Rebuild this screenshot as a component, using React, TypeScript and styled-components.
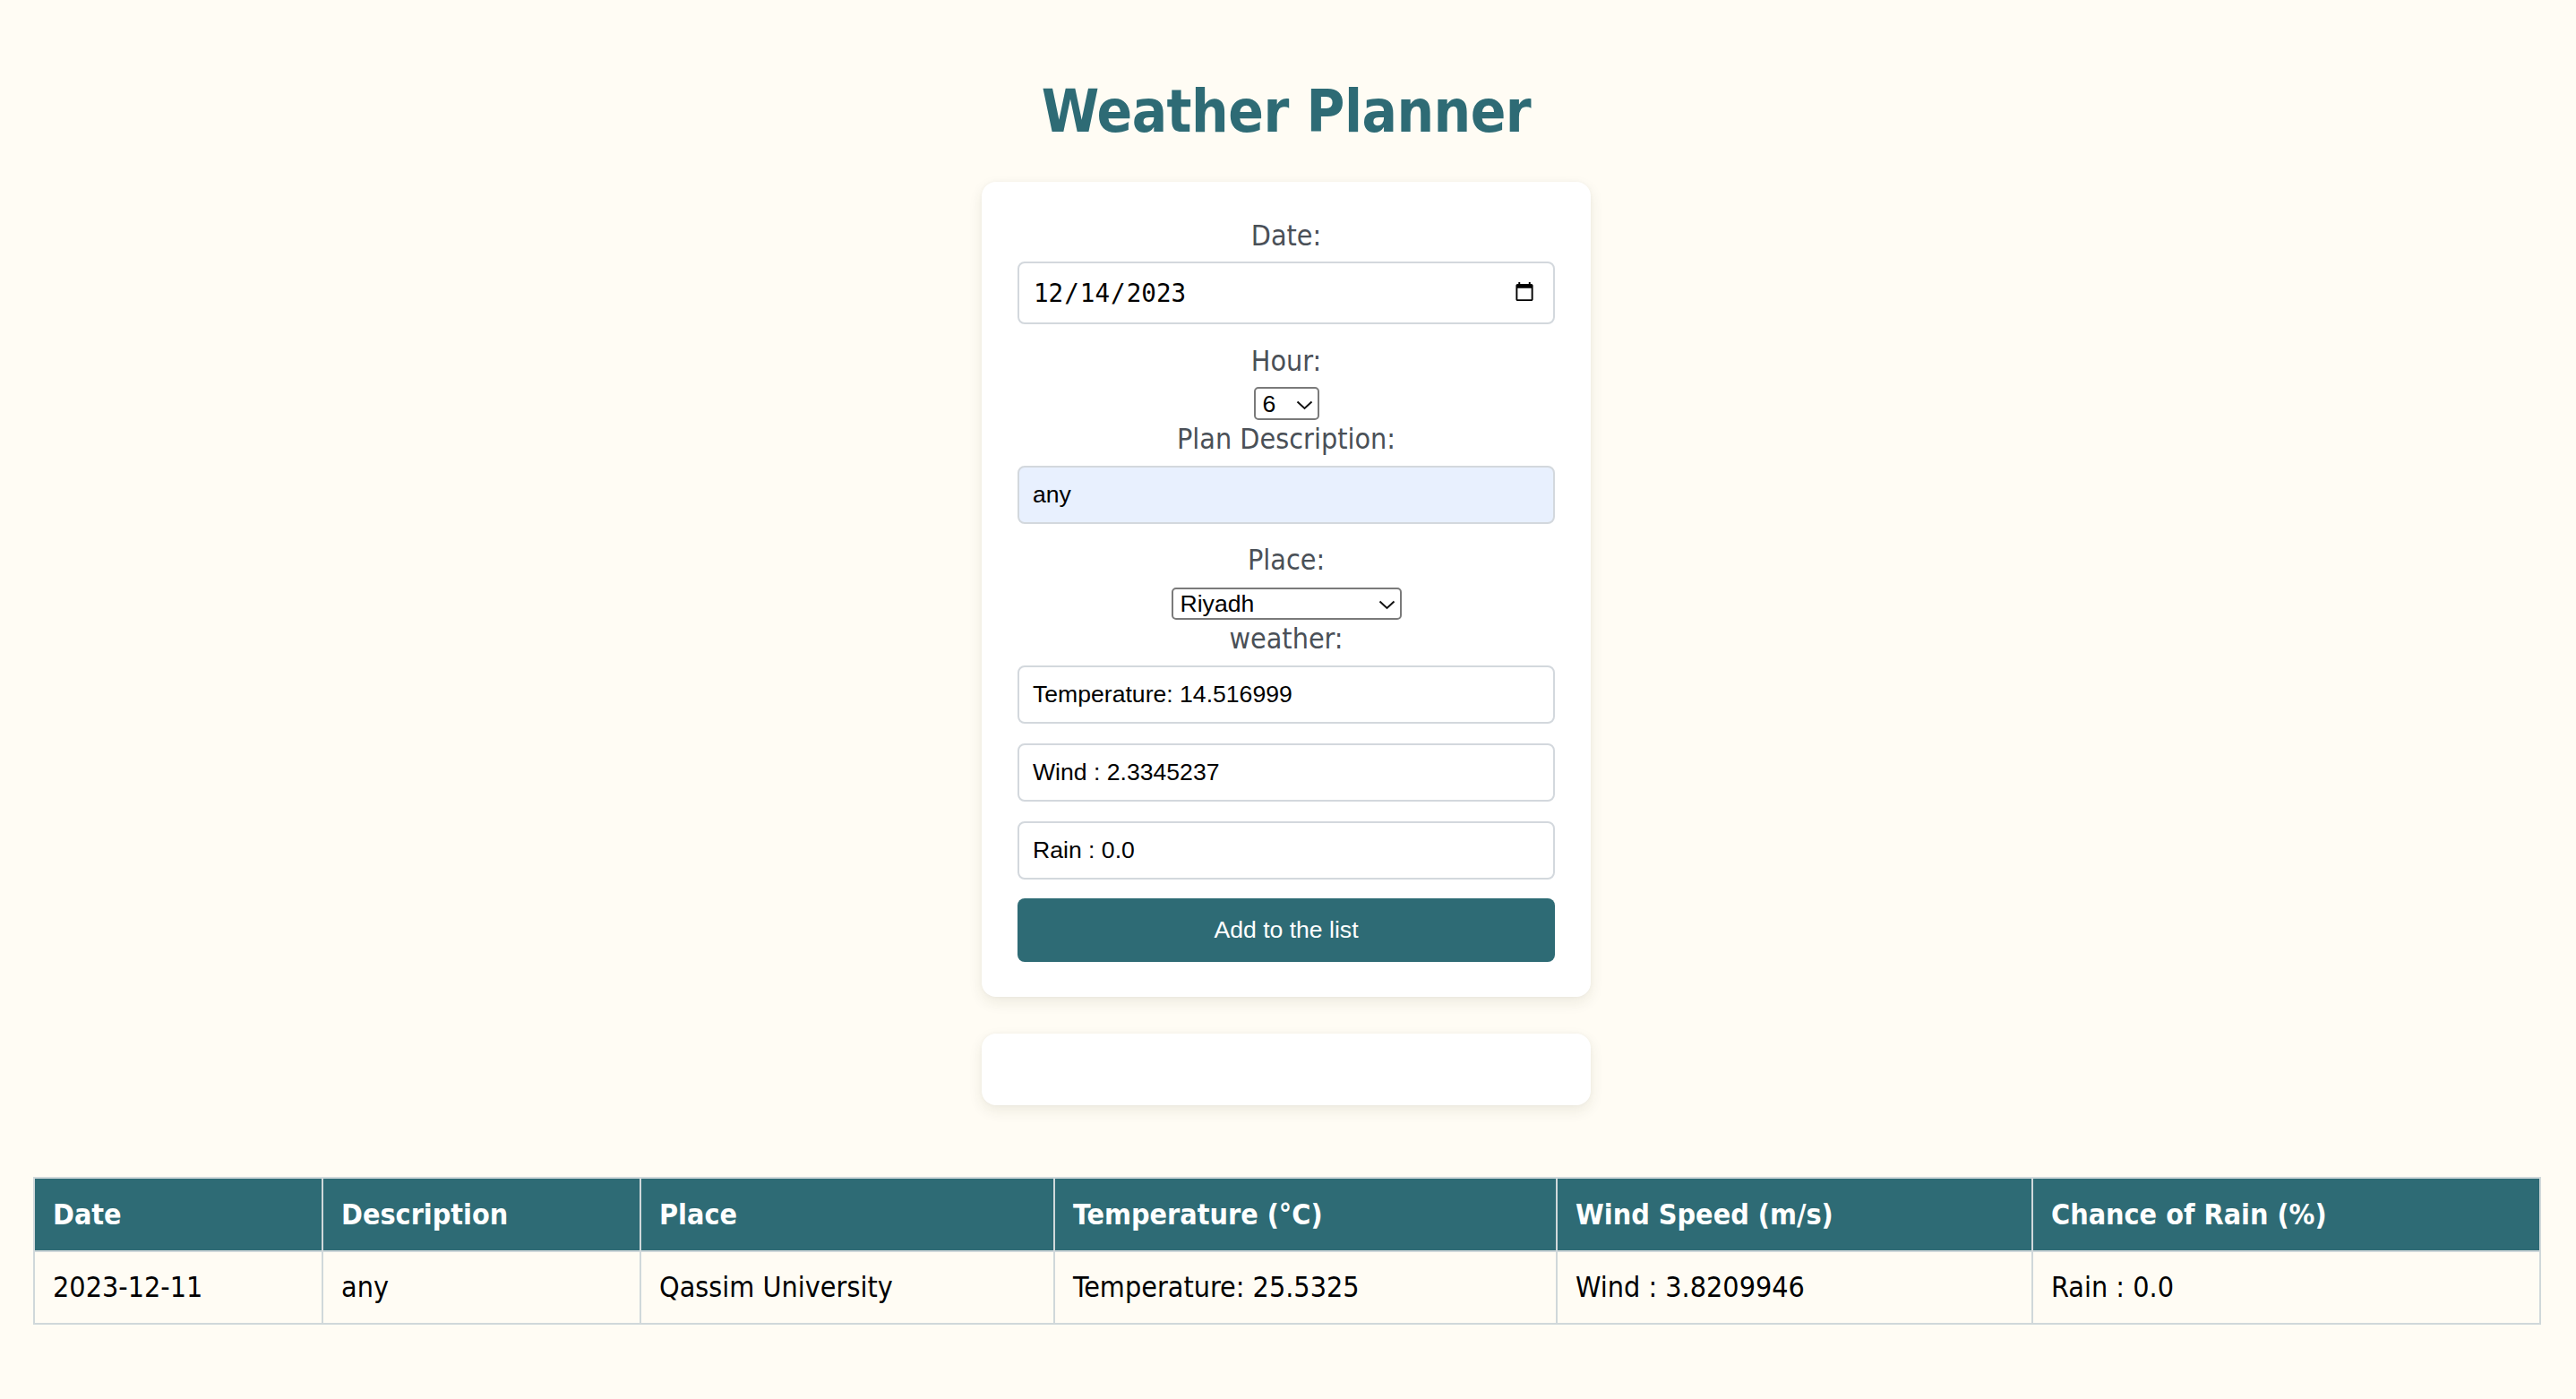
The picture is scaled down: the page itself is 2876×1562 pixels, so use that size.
import React from "react";
import styled, { createGlobalStyle } from "styled-components";

const GlobalStyle = createGlobalStyle`
  html, body {
    margin: 0;
    padding: 0;
    background: #fffcf4;
  }
  * { box-sizing: border-box; }
`;

const Page = styled.div`
  min-height: 1562px;
  padding: 87px 4px 0 0;
  background: #fffcf4;
  font-family: "DejaVu Sans Condensed", "DejaVu Sans", sans-serif;
  display: flex;
  flex-direction: column;
  align-items: stretch;
`;

const Title = styled.h1`
  margin: 0;
  font-size: 65px;
  line-height: 76px;
  font-weight: 700;
  letter-spacing: -0.5px;
  color: #2e6b75;
  text-align: center;
  font-family: "DejaVu Sans Condensed", "DejaVu Sans", sans-serif;
`;

const Card = styled.div<{ $mt: number; $h?: number }>`
  width: 680px;
  margin: ${(p) => p.$mt}px auto 0;
  background: #ffffff;
  border-radius: 16px;
  box-shadow: 0 6px 16px rgba(60, 50, 20, 0.09), 0 0 4px rgba(60, 50, 20, 0.04);
  ${(p) => (p.$h ? `height: ${p.$h}px;` : "")}
`;

const Form = styled.form`
  display: flex;
  flex-direction: column;
  align-items: center;
  padding: 42px 40px 39px;
`;

const Label = styled.label<{ $mb?: number }>`
  display: block;
  font-size: 32px;
  line-height: 37px;
  color: #4a5057;
  text-align: center;
  margin-bottom: ${(p) => p.$mb ?? 10}px;
`;

const TextField = styled.input<{ $h: number; $mb: number; $fill?: boolean }>`
  display: block;
  align-self: stretch;
  width: 100%;
  height: ${(p) => p.$h}px;
  margin: 0 0 ${(p) => p.$mb}px;
  padding: 0 15px;
  border: 2px solid #d3d8dd;
  border-radius: 8px;
  background: ${(p) => (p.$fill ? "#e8f0fe" : "#ffffff")};
  font-family: "Liberation Sans", Arial, sans-serif;
  font-size: 26.6px;
  color: #000;
  outline: none;
`;

const DateField = styled.input`
  display: block;
  align-self: stretch;
  width: 100%;
  height: 70px;
  margin: 0 0 23px;
  padding: 0 20px 0 15px;
  border: 2px solid #d3d8dd;
  border-radius: 8px;
  background: #ffffff;
  font-family: "DejaVu Sans Mono", monospace;
  font-size: 27.6px;
  color: #000;
  outline: none;
  &::-webkit-calendar-picker-indicator {
    width: 24px;
    height: 26px;
    padding: 0;
    margin: 0;
  }
`;

const SelectWrap = styled.div<{ $w: number; $h: number; $mb: number }>`
  position: relative;
  width: ${(p) => p.$w}px;
  height: ${(p) => p.$h}px;
  margin-bottom: ${(p) => p.$mb}px;
`;

const Select = styled.select<{ $pl: number }>`
  appearance: none;
  -webkit-appearance: none;
  width: 100%;
  height: 100%;
  margin: 0;
  padding: 0 0 0 ${(p) => p.$pl}px;
  border: 2px solid #7a7a7a;
  border-radius: 5px;
  background: #ffffff;
  font-family: "Liberation Sans", Arial, sans-serif;
  font-size: 26.6px;
  color: #000;
  outline: none;
`;

const Chevron = styled.svg`
  position: absolute;
  right: 7px;
  top: 50%;
  width: 19px;
  height: 11px;
  margin-top: -4px;
  pointer-events: none;
`;

const Button = styled.button`
  align-self: stretch;
  width: 100%;
  height: 71px;
  margin: 0;
  border: none;
  border-radius: 8px;
  background: #2e6b75;
  color: #ffffff;
  font-family: "Liberation Sans", Arial, sans-serif;
  font-size: 26.6px;
  cursor: pointer;
`;

const TableWrap = styled.div`
  margin-top: 80px;
  padding: 0 37px 0 37px;
`;

const Table = styled.table`
  width: 2798px;
  border-collapse: collapse;
  table-layout: fixed;
  font-family: "DejaVu Sans Condensed", "DejaVu Sans", sans-serif;
  font-size: 32px;
`;

const Th = styled.th`
  background: #2e6b75;
  color: #ffffff;
  font-weight: 700;
  text-align: left;
  padding: 21px 20px;
  line-height: 38px;
  border: 2px solid #d0d8da;
  white-space: nowrap;
`;

const Td = styled.td`
  color: #000;
  text-align: left;
  padding: 21px 20px;
  line-height: 37px;
  border: 2px solid #d0d8da;
  white-space: nowrap;
`;

const ChevronIcon = () => (
  <Chevron viewBox="0 0 19 11">
    <path d="M1.5 1.5 L9.5 9 L17.5 1.5" fill="none" stroke="#111" strokeWidth="2" />
  </Chevron>
);

const columns = [
  { label: "Date", width: 322 },
  { label: "Description", width: 355 },
  { label: "Place", width: 462 },
  { label: "Temperature (°C)", width: 561 },
  { label: "Wind Speed (m/s)", width: 531 },
  { label: "Chance of Rain (%)", width: 567 },
];

const rows = [
  ["2023-12-11", "any", "Qassim University", "Temperature: 25.5325", "Wind : 3.8209946", "Rain : 0.0"],
];

export default function App() {
  const hours = Array.from({ length: 24 }, (_, i) => i);
  return (
    <>
      <GlobalStyle />
      <Page>
        <Title>Weather Planner</Title>
        <Card $mt={40}>
          <Form onSubmit={(e) => e.preventDefault()}>
            <Label htmlFor="date">Date:</Label>
            <DateField id="date" type="date" defaultValue="2023-12-14" />

            <Label htmlFor="hour">Hour:</Label>
            <SelectWrap $w={73} $h={37} $mb={3}>
              <Select id="hour" $pl={8} defaultValue="6">
                {hours.map((h) => (
                  <option key={h} value={String(h)}>
                    {h}
                  </option>
                ))}
              </Select>
              <ChevronIcon />
            </SelectWrap>

            <Label htmlFor="desc" $mb={11}>Plan Description:</Label>
            <TextField id="desc" $h={65} $mb={22} $fill defaultValue="any" />

            <Label htmlFor="place" $mb={12}>Place:</Label>
            <SelectWrap $w={257} $h={36} $mb={3}>
              <Select id="place" $pl={8} defaultValue="Riyadh">
                <option value="Riyadh">Riyadh</option>
                <option value="Qassim University">Qassim University</option>
                <option value="Jeddah">Jeddah</option>
              </Select>
              <ChevronIcon />
            </SelectWrap>

            <Label $mb={11}>weather:</Label>
            <TextField $h={65} $mb={22} readOnly value="Temperature: 14.516999" />
            <TextField $h={65} $mb={22} readOnly value="Wind : 2.3345237" />
            <TextField $h={65} $mb={21} readOnly value="Rain : 0.0" />

            <Button type="submit">Add to the list</Button>
          </Form>
        </Card>
        <Card $mt={41} $h={80} />
        <TableWrap>
          <Table>
            <colgroup>
              {columns.map((c) => (
                <col key={c.label} style={{ width: c.width }} />
              ))}
            </colgroup>
            <thead>
              <tr>
                {columns.map((c) => (
                  <Th key={c.label}>{c.label}</Th>
                ))}
              </tr>
            </thead>
            <tbody>
              {rows.map((r, i) => (
                <tr key={i}>
                  {r.map((cell, j) => (
                    <Td key={j}>{cell}</Td>
                  ))}
                </tr>
              ))}
            </tbody>
          </Table>
        </TableWrap>
      </Page>
    </>
  );
}
